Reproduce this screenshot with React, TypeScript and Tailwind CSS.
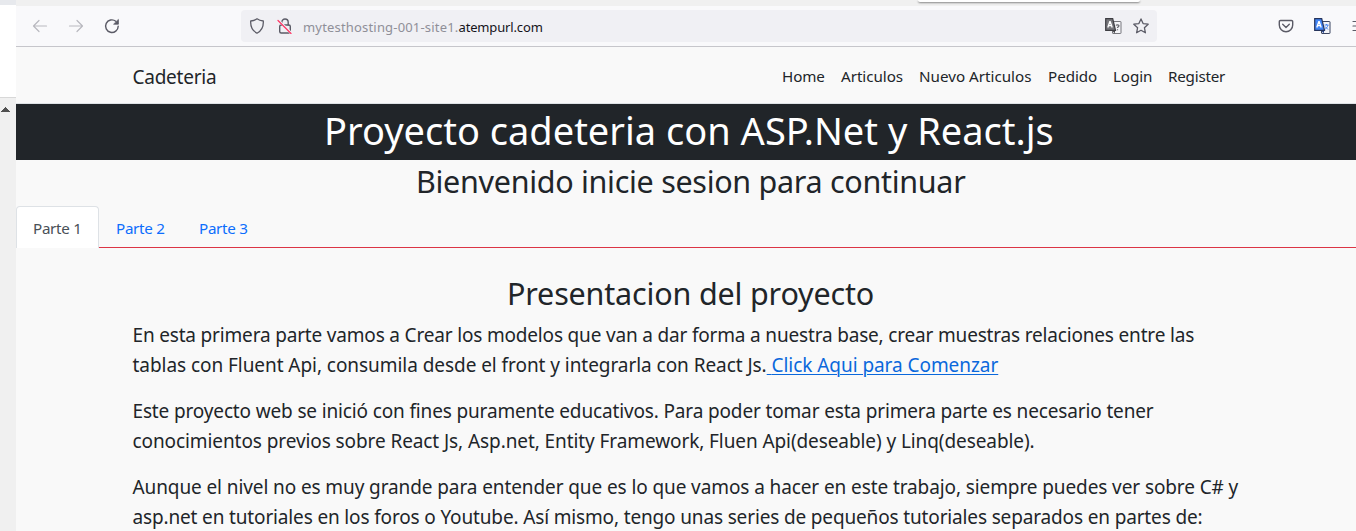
import React from 'react';

const navItems = [
  { label: 'Home', width: 'w-[43px]', tracking: 'tracking-[-0.1px]' },
  { label: 'Articulos', width: 'w-[62px]', tracking: 'tracking-[-0.04px]' },
  { label: 'Nuevo Articulos', width: 'w-[113px]', tracking: 'tracking-[0px]' },
  { label: 'Pedido', width: 'w-[49px]', tracking: 'tracking-[-0.06px]' },
  { label: 'Login', width: 'w-[39px]', tracking: 'tracking-[-0.1px]' },
  { label: 'Register', width: 'w-[57px]', tracking: 'tracking-[-0.22px]' },
];

const icon = { fill: 'none', stroke: 'currentColor', strokeLinecap: 'round', strokeLinejoin: 'round' } as const;

function TranslateIcon({ color = false }: { color?: boolean }) {
  return (
    <svg width="17" height="17" viewBox="0 0 17 17">
      <rect x="7.5" y="3.5" width="8.5" height="12" rx="0.5" fill="#f4f4f7" stroke={color ? '#3b4560' : '#77777c'} />
      {color ? (
        <path d="M10.5 7h4M12.5 6v1M14 7c-.5 2.500-2 3.500-3.500 4.500M11 8.500l3 3" fill="none" stroke="#4285f4" strokeWidth="1" />
      ) : (
        <path d="M11 7.500c.5-1 3-1 3 .3 0 1-1.500 1-1.500 2.200M12.500 11.200v1" fill="none" stroke="#66666b" strokeWidth="1.200" />
      )}
      <path d="M7 12h3.500l-1 3.500z" fill={color ? '#25448d' : '#444449'} />
      <path d="M.7.7h7L10.500 12.300H.7z" fill={color ? '#4285f4' : '#77777c'} stroke={color ? '#26345c' : '#3d3d42'} strokeWidth="1.200" />
      <path d="M2.800 9.500l2-5.800h.4l2 5.800M3.500 7.700h3" fill="none" stroke="#fff" strokeWidth="1.300" />
    </svg>
  );
}

function Toolbar() {
  return (
    <div className="flex h-[41px] shrink-0 items-center border-b border-[#c6c6cb] bg-[#f9f9fb] text-[#5b5b66]">
      <svg className="ml-4 shrink-0 text-[#b9b9bf]" width="16" height="16" viewBox="0 0 16 16" {...icon} strokeWidth="1.200">
        <path d="M14.500 8H1.500M7 2.500L1.500 8 7 13.500" />
      </svg>
      <svg className="ml-5 shrink-0 text-[#b9b9bf]" width="16" height="16" viewBox="0 0 16 16" {...icon} strokeWidth="1.200">
        <path d="M1.500 8h13M9 2.500L14.500 8 9 13.500" />
      </svg>
      <svg className="ml-5 shrink-0" width="16" height="16" viewBox="0 0 16 16" {...icon} strokeWidth="1.400">
        <path d="M14.200 8.200A6.300 6.300 0 1 1 11.800 3.200" />
        <path d="M14.400 1.800v4.400H10z" fill="currentColor" strokeWidth="0.800" />
      </svg>
      <div className="ml-[121px] flex h-8 w-[916px] shrink-0 items-center rounded bg-[#f0f0f4]">
        <svg className="ml-2" width="16" height="16" viewBox="0 0 16 16" {...icon} strokeWidth="1.300">
          <path d="M8 .8c1.800 1.400 3.800 2 6.300 2.200.3 5-.8 9.200-6.300 12.200C2.500 12.200 1.400 8 1.700 3 4.200 2.800 6.200 2.200 8 .8z" />
        </svg>
        <svg className="ml-3" width="16" height="16" viewBox="0 0 16 16" {...icon} strokeWidth="1.400">
          <path d="M4.800 7V4.200a3.200 3.200 0 0 1 6.400 0V7" />
          <rect x="2.700" y="7" width="10.600" height="8" rx="1.500" />
          <path d="M1.200 2.200l13 13" stroke="#f0f0f4" strokeWidth="2.500" />
          <path d="M1 2.500l13 13" stroke="#ff3464" strokeWidth="1.200" />
        </svg>
        <div className="ml-[10px] flex whitespace-nowrap pt-[2px] text-[13px] leading-[18px]">
          <span className="w-[155.500px] tracking-[0.18px] text-[#8f8f98]">mytesthosting-001-site1.</span>
          <span className="tracking-[-0.15px] text-[#15141a]">atempurl.com</span>
        </div>
        <div className="ml-auto mr-2 flex items-center gap-[11px]">
          <TranslateIcon />
          <svg width="16" height="16" viewBox="0 0 16 16" {...icon} strokeWidth="1.300">
            <path d="M8 .9l2.100 4.700 5.100.6-3.800 3.500 1 5.100L8 12.300l-4.400 2.500 1-5.100L.8 6.200l5.100-.6z" />
          </svg>
        </div>
      </div>
      <svg className="ml-[121px] shrink-0" width="16" height="16" viewBox="0 0 16 16" {...icon} strokeWidth="1.400">
        <path d="M2.500 2.500h11a1.200 1.200 0 0 1 1.200 1.200V7a6.700 6.700 0 0 1-13.400 0V3.700a1.200 1.200 0 0 1 1.200-1.200z" />
        <path d="M4.700 6.300L8 9.400l3.300-3.100" />
      </svg>
      <div className="ml-5 shrink-0">
        <TranslateIcon color />
      </div>
      <svg className="ml-[21px] shrink-0" width="4" height="16" viewBox="0 0 4 16" {...icon} strokeWidth="1.200">
        <path d="M1 3.500h6M1 8h6M1 12.500h6" />
      </svg>
    </div>
  );
}

export default function App() {
  return (
    <div className="flex h-[531px] w-[1356px] overflow-hidden bg-[#f9f9f9] font-['Noto_Sans','Open_Sans',sans-serif] text-[#212529]">
      <aside className="flex w-4 shrink-0 flex-col">
        <div className="h-[5px] bg-[#e7e9ed]" />
        <div className="h-[92px] bg-white" />
        <div className="flex-1 border-t border-[#d8d8d8] bg-[#f0f0f0] pt-[9px]">
          <svg className="ml-px" width="9" height="5" viewBox="0 0 9 5" shapeRendering="crispEdges">
            <path d="M0 5L4.500 0 9 5z" fill="#505050" />
          </svg>
        </div>
      </aside>
      <main className="flex min-w-0 flex-1 flex-col">
        <div className="h-[6px] shrink-0 overflow-hidden bg-[#f0f0f0]">
          <div className="ml-[902px] h-[2px] w-[222px] rounded-b bg-white shadow-[0_1px_2px_rgba(0,0,0,0.45)]" />
        </div>
        <Toolbar />
        <nav className="flex h-[57px] shrink-0 items-center border-b border-[#dee2e6] pl-[116.500px] pr-[131px]">
          <a className="pt-1 text-[19px] leading-[30px] tracking-[-0.25px]">Cadeteria</a>
          <div className="ml-auto flex gap-4 whitespace-nowrap pt-[2px] text-[15.2px] leading-6">
            {navItems.map((item) => (
              <a key={item.label} className={`${item.width} ${item.tracking}`}>{item.label}</a>
            ))}
          </div>
        </nav>
        <h1 className="h-14 shrink-0 bg-[#212529] pl-[308px] text-[38px] leading-[52px] text-white">
          Proyecto cadeteria con ASP.Net y React.js
        </h1>
        <h2 className="h-[46px] shrink-0 pl-[400px] text-[30.5px] leading-[42px] tracking-[-0.3px]">
          Bienvenido inicie sesion para continuar
        </h2>
        <div className="flex h-[42px] shrink-0 text-[15.2px] leading-6 tracking-[-0.3px] text-[#0d6efd]">
          <div className="w-[83px] rounded-t border border-b-0 border-[#dee2e6] bg-white pl-4 pt-[9px] text-[#495057]">Parte 1</div>
          <div className="flex flex-1 border-b border-[#dc3545] pt-[10px]">
            <a className="w-[83px] pl-[17px]">Parte 2</a>
            <a className="w-[83px] pl-[17px]">Parte 3</a>
          </div>
        </div>
        <section className="whitespace-nowrap pl-[116.500px] pt-[26px] text-[19px] leading-[30px]">
          <h2 className="mb-2 pl-[374.500px] text-[30.5px] leading-[38px] tracking-[-0.17px]">Presentacion del proyecto</h2>
          <p className="mb-4">
            <span className="block tracking-[-0.177px]">En esta primera parte vamos a Crear los modelos que van a dar forma a nuestra base, crear muestras relaciones entre las</span>
            <span className="block tracking-[-0.055px]">
              tablas con Fluent Api, consumila desde el front y integrarla con React Js.
              <a className="text-[#0a68dc] underline decoration-1 underline-offset-2">{' '}Click Aqui para Comenzar</a>
            </span>
          </p>
          <p className="mb-4">
            <span className="block tracking-[-0.147px]">Este proyecto web se inició con fines puramente educativos. Para poder tomar esta primera parte es necesario tener</span>
            <span className="block tracking-[-0.088px]">conocimientos previos sobre React Js, Asp.net, Entity Framework, Fluen Api(deseable) y Linq(deseable).</span>
          </p>
          <p>
            <span className="block tracking-[-0.1px]">Aunque el nivel no es muy grande para entender que es lo que vamos a hacer en este trabajo, siempre puedes ver sobre C# y</span>
            <span className="block tracking-[-0.15px]">asp.net en tutoriales en los foros o Youtube. Así mismo, tengo unas series de pequeños tutoriales separados en partes de:</span>
          </p>
        </section>
      </main>
    </div>
  );
}
